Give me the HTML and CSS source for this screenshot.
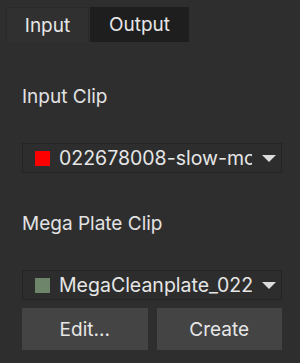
FILE: index.html
```html
<!DOCTYPE html>
<html lang="en">
<head>
  <meta charset="UTF-8">
  <title>Clip Settings</title>
  <link rel="stylesheet" href="styles.css">
</head>
<body>

  <div class="tabs">
    <div class="tab active">Input</div>
    <div class="tab">Output</div>
  </div>

  <div class="panel">
    <div class="field-label">Input Clip</div>
    <div class="dropdown">
      <span class="swatch red"></span>
      <span class="dropdown-text">022678008-slow-motion</span>
      <span class="arrow"></span>
    </div>

    <div class="field-label second">Mega Plate Clip</div>
    <div class="dropdown">
      <span class="swatch green"></span>
      <span class="dropdown-text">MegaCleanplate_022678</span>
      <span class="arrow"></span>
    </div>

    <div class="buttons">
      <button>Edit...</button>
      <button>Create</button>
    </div>
  </div>

</body>
</html>
```

FILE: styles.css
```css
body {
  margin: 0;
  background: #2e2e2e;
  color: #e2e2e2;
  font-family: 'Inter', 'Noto Sans', sans-serif;
  width: 300px;
  height: 363px;
  overflow: hidden;
}

.tabs {
  display: flex;
  padding: 7px 0 0 6px;
}

.tab {
  height: 35px;
  line-height: 35px;
  font-size: 19px;
  background: #1e1e1e;
  color: #e6e6e6;
  width: 99px;
  text-align: center;
}

.tab.active {
  background: #303030;
  border: 1px solid #292929;
  border-bottom: none;
  box-sizing: border-box;
  width: 83px;
  margin-right: 1px;
}

.panel {
  padding: 0 18px 0 22px;
}

.field-label {
  font-size: 19px;
  margin-top: 44px;
  height: 22px;
  line-height: 22px;
}

.field-label.second {
  margin-top: 40px;
}

.dropdown {
  display: flex;
  align-items: center;
  height: 30px;
  box-sizing: border-box;
  border: 1px solid #242424;
  background: #2d2d2d;
  margin-top: 35px;
  padding: 0 5px 0 12px;
}

.swatch {
  width: 15px;
  height: 15px;
  flex: none;
}

.swatch.red {
  background: #ff0000;
}

.swatch.green {
  background: #6f856b;
}

.dropdown-text {
  flex: 1;
  margin-left: 9px;
  font-size: 19.5px;
  white-space: nowrap;
  overflow: hidden;
  color: #e6e6e6;
}

.arrow {
  width: 0;
  height: 0;
  border-left: 7px solid transparent;
  border-right: 7px solid transparent;
  border-top: 7px solid #dcdcdc;
  margin-left: 10px;
}

.buttons {
  display: flex;
  gap: 9px;
  margin-top: 8px;
}

button {
  flex: 1;
  height: 42px;
  border: none;
  background: #444444;
  color: #e6e6e6;
  font-family: inherit;
  font-size: 19px;
  padding: 0;
}
```
